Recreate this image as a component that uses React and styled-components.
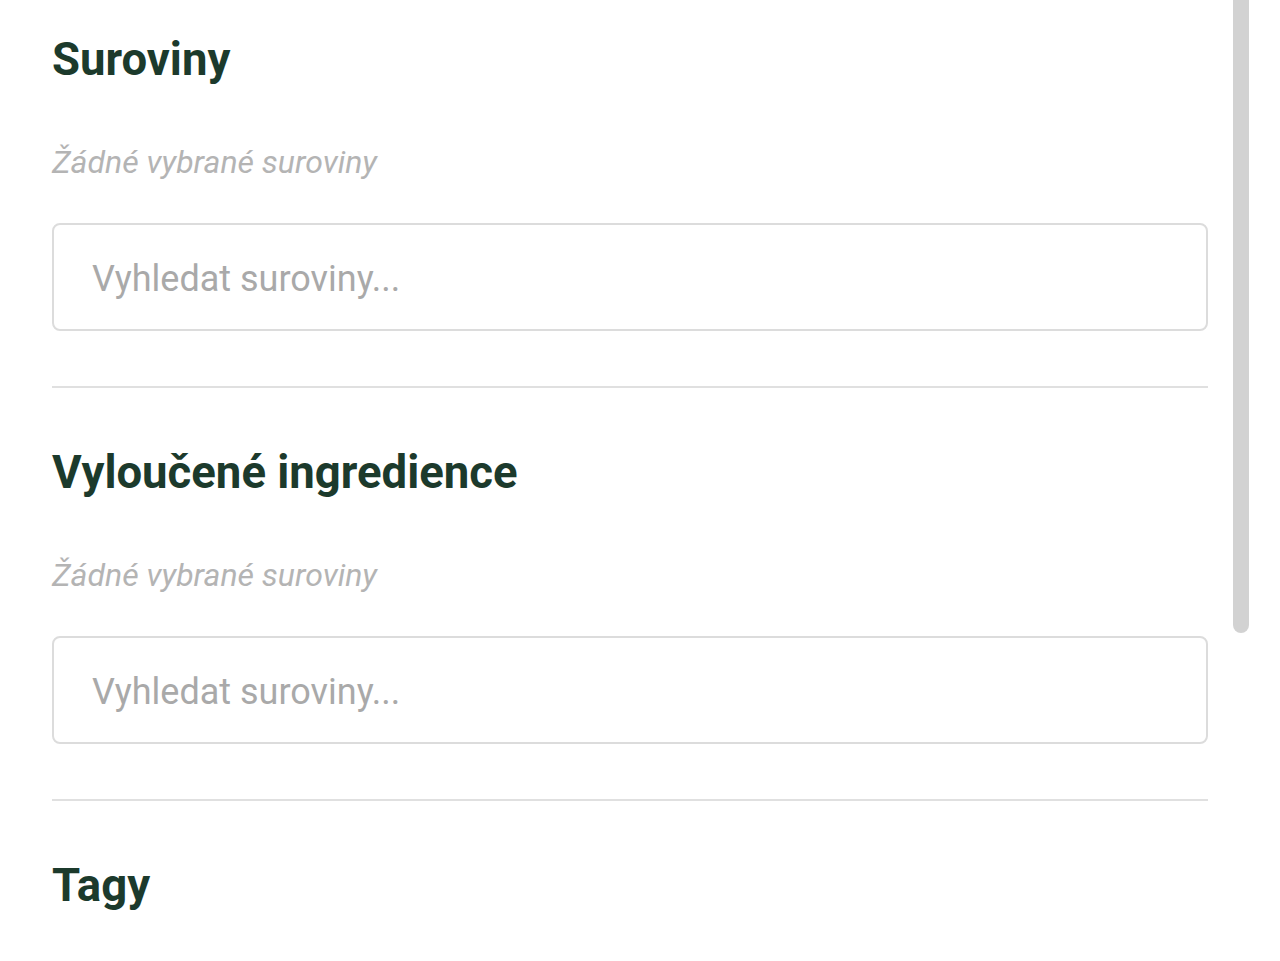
import React from "react";
import styled, { createGlobalStyle } from "styled-components";

const Global = createGlobalStyle`
  html, body { margin: 0; padding: 0; background: #ffffff; }
  body { font-family: Roboto, "Noto Sans", "Liberation Sans", sans-serif; overflow: hidden; }
`;

const Page = styled.div`
  position: relative;
  width: 1280px;
  height: 961px;
  overflow: hidden;
  background: #fff;
`;

const Content = styled.div`
  padding: 36px 72px 0 52px;
  display: flex;
  flex-direction: column;
`;

const Section = styled.section`
  display: flex;
  flex-direction: column;
`;

const Heading = styled.h2`
  margin: 0 0 58px;
  font-size: 45.5px;
  line-height: 48px;
  font-weight: 700;
  color: #1c3a2c;
  letter-spacing: 0;
`;

const Empty = styled.p`
  margin: 0;
  font-size: 32px;
  line-height: 40px;
  font-style: italic;
  color: #b4b4b4;
`;

const SearchInput = styled.input`
  margin-top: 41px;
  box-sizing: border-box;
  width: 100%;
  height: 108px;
  border: 2px solid #dcdcdc;
  border-radius: 8px;
  padding: 3px 36px 0 38px;
  font-family: Roboto, "Noto Sans", sans-serif;
  font-size: 36px;
  color: #333;
  background: #fff;
  outline: none;
  &::placeholder { color: #a9a9a9; }
`;

const Divider = styled.hr`
  margin: 55px 0 61px;
  border: 0;
  height: 2px;
  background: #e0e0e0;
`;

const ScrollThumb = styled.div`
  position: absolute;
  right: 31px;
  top: -20px;
  width: 16px;
  height: 653px;
  border-radius: 8px;
  background: #d2d2d2;
`;

const sections = [
  { title: "Suroviny", empty: "Žádné vybrané suroviny", placeholder: "Vyhledat suroviny..." },
  { title: "Vyloučené ingredience", empty: "Žádné vybrané suroviny", placeholder: "Vyhledat suroviny..." },
];

export default function App() {
  return (
    <Page>
      <Global />
      <Content>
        {sections.map((s) => (
          <React.Fragment key={s.title}>
            <Section>
              <Heading>{s.title}</Heading>
              <Empty>{s.empty}</Empty>
              <SearchInput placeholder={s.placeholder} />
            </Section>
            <Divider />
          </React.Fragment>
        ))}
        <Section>
          <Heading>Tagy</Heading>
        </Section>
      </Content>
      <ScrollThumb />
    </Page>
  );
}
